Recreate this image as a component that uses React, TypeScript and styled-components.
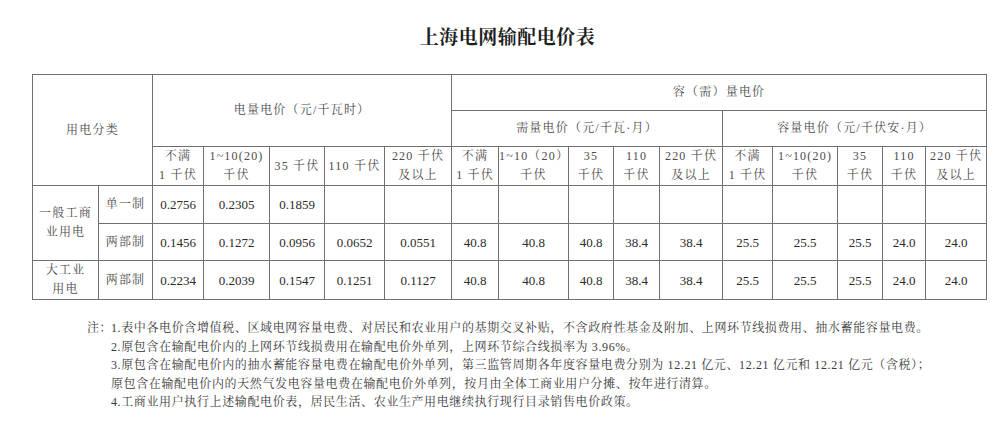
import styled, { createGlobalStyle } from "styled-components"

const GlobalStyle = createGlobalStyle`
  html, body {
    margin: 0;
    padding: 0;
    background: #fff;
  }
  body {
    font-family: "Liberation Serif", "Noto Serif CJK SC", "Noto Sans CJK SC", serif;
    color: #333;
  }
`

const cjk = `"Liberation Serif", "Noto Serif CJK SC", "Noto Sans CJK SC", serif`

const Page = styled.div`
  width: 1001px;
  height: 437px;
  overflow: hidden;
`

const Title = styled.h1`
  margin: 0;
  padding: 25px 0 0 14px;
  height: 74px;
  box-sizing: border-box;
  text-align: center;
  font-family: "Noto Serif CJK SC", "Noto Sans CJK SC", serif;
  font-size: 19px;
  line-height: 22px;
  font-weight: 700;
  color: #1e1e1e;
  letter-spacing: 0.5px;
`

const PriceTable = styled.table`
  margin-left: 32px;
  width: 954px;
  table-layout: fixed;
  border-collapse: collapse;
  font-family: ${cjk};
`

const Row = styled.tr<{ $h: number }>`
  height: ${p => p.$h}px;
`

const Cell = styled.td<{ $num?: boolean }>`
  border: 1px solid #707070;
  padding: 0;
  text-align: center;
  vertical-align: middle;
  font-size: ${p => (p.$num ? "13px" : "12px")};
  line-height: 19px;
  letter-spacing: ${p => (p.$num ? "0" : "1.2px")};
  color: ${p => (p.$num ? "#2a2a2a" : "#4a4a4a")};
  white-space: nowrap;
`

const Notes = styled.div`
  display: flex;
  margin: 19px 0 0 87px;
  font-family: ${cjk};
  font-size: 12px;
  line-height: 18.5px;
  color: #3a3a3a;
`

const NoteLabel = styled.div`
  width: 24px;
  flex: none;
  letter-spacing: 0.5px;
`

const NoteLines = styled.div`
  display: flex;
  flex-direction: column;
`

const NoteLine = styled.div`
  letter-spacing: 0.62px;
  white-space: nowrap;
`

const widths = [66, 54, 51, 66, 55, 60, 67, 47, 70, 45, 46, 63, 50, 65, 45, 43, 61]

const twoLine = (a: string, b: string) => (
  <>
    {a}
    <br />
    {b}
  </>
)

const voltHeads = [
  twoLine("不满", "1 千伏"),
  twoLine("1~10(20)", "千伏"),
  "35 千伏",
  "110 千伏",
  twoLine("220 千伏", "及以上"),
  twoLine("不满", "1 千伏"),
  twoLine("1~10（20）", "千伏"),
  twoLine("35", "千伏"),
  twoLine("110", "千伏"),
  twoLine("220 千伏", "及以上"),
  twoLine("不满", "1 千伏"),
  twoLine("1~10(20)", "千伏"),
  twoLine("35", "千伏"),
  twoLine("110", "千伏"),
  twoLine("220 千伏", "及以上"),
]

const single = ["0.2756", "0.2305", "0.1859", "", "", "", "", "", "", "", "", "", "", "", ""]
const capacity = ["40.8", "40.8", "40.8", "38.4", "38.4", "25.5", "25.5", "25.5", "24.0", "24.0"]
const general = ["0.1456", "0.1272", "0.0956", "0.0652", "0.0551", ...capacity]
const large = ["0.2234", "0.2039", "0.1547", "0.1251", "0.1127", ...capacity]

const notes = [
  "1.表中各电价含增值税、区域电网容量电费、对居民和农业用户的基期交叉补贴，不含政府性基金及附加、上网环节线损费用、抽水蓄能容量电费。",
  "2.原包含在输配电价内的上网环节线损费用在输配电价外单列，上网环节综合线损率为 3.96%。",
  "3.原包含在输配电价内的抽水蓄能容量电费在输配电价外单列，第三监管周期各年度容量电费分别为 12.21 亿元、12.21 亿元和 12.21 亿元（含税）；",
  "原包含在输配电价内的天然气发电容量电费在输配电价外单列，按月由全体工商业用户分摊、按年进行清算。",
  "4.工商业用户执行上述输配电价表，居民生活、农业生产用电继续执行现行目录销售电价政策。",
]

const Values = ({ list }: { list: string[] }) => (
  <>
    {list.map((v, i) => (
      <Cell key={i} $num>
        {v}
      </Cell>
    ))}
  </>
)

export default function App() {
  return (
    <Page>
      <GlobalStyle />
      <Title>上海电网输配电价表</Title>
      <PriceTable>
        <colgroup>
          {widths.map((w, i) => (
            <col key={i} style={{ width: w }} />
          ))}
        </colgroup>
        <tbody>
          <Row $h={36}>
            <Cell colSpan={2} rowSpan={3}>用电分类</Cell>
            <Cell colSpan={5} rowSpan={2}>电量电价（元/千瓦时）</Cell>
            <Cell colSpan={10}>容（需）量电价</Cell>
          </Row>
          <Row $h={36}>
            <Cell colSpan={5}>需量电价（元/千瓦·月）</Cell>
            <Cell colSpan={5}>容量电价（元/千伏安·月）</Cell>
          </Row>
          <Row $h={38}>
            {voltHeads.map((h, i) => (
              <Cell key={i}>{h}</Cell>
            ))}
          </Row>
          <Row $h={38}>
            <Cell rowSpan={2}>{twoLine("一般工商", "业用电")}</Cell>
            <Cell>单一制</Cell>
            <Values list={single} />
          </Row>
          <Row $h={37}>
            <Cell>两部制</Cell>
            <Values list={general} />
          </Row>
          <Row $h={38}>
            <Cell>{twoLine("大工业", "用电")}</Cell>
            <Cell>两部制</Cell>
            <Values list={large} />
          </Row>
        </tbody>
      </PriceTable>
      <Notes>
        <NoteLabel>注：</NoteLabel>
        <NoteLines>
          {notes.map((n, i) => (
            <NoteLine key={i}>{n}</NoteLine>
          ))}
        </NoteLines>
      </Notes>
    </Page>
  )
}
